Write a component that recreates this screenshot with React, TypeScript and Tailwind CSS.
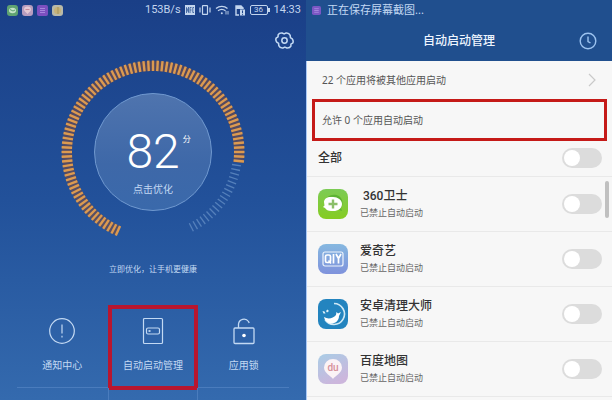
import React from 'react';

interface AppEntry {
  id: string;
  name: string;
  icon: React.ReactNode;
}

const STATUS = '已禁止自动启动';

const ShieldIcon = () => (
  <svg viewBox="0 0 30 30" className="size-[30px]" aria-hidden="true">
    <defs>
      <linearGradient id="shield" x1="0" y1="0" x2="0" y2="1">
        <stop offset="0" stopColor="#7ccb55" />
        <stop offset="1" stopColor="#86cc22" />
      </linearGradient>
    </defs>
    <rect width="30" height="30" rx="8" fill="url(#shield)" />
    <path d="M9 8.500C14 4 22 5.500 24 11c1 3 .5 6-1 8l1 3-4-1.500c4-4 3-10-2-12-3-1.200-6-1-9 0Z" fill="#55ab2f" opacity=".8" />
    <path d="M6 13c0-3.500 4-5.500 8-5 5-.5 10 2.500 10 7 0 5-5 7.500-9.500 7-4 .5-6-1-7.500-3l-2-1 1.500-1.500Z" fill="#fff" />
    <path d="M15 10.500v9M10.500 15h9" stroke="#8bbf6a" strokeWidth="2.400" />
  </svg>
);

const QiyIcon = () => (
  <svg viewBox="0 0 30 30" className="size-[30px]" aria-hidden="true">
    <defs>
      <linearGradient id="qiy" x1="0" y1="0" x2="0" y2="1">
        <stop offset="0" stopColor="#86b8e0" />
        <stop offset="1" stopColor="#7f92dc" />
      </linearGradient>
    </defs>
    <rect width="30" height="30" rx="8" fill="url(#qiy)" />
    <rect x="5" y="8" width="20" height="14" rx="2" fill="none" stroke="#eef4fc" strokeWidth="1.200" />
    <rect x="7.500" y="11" width="5" height="7.500" rx="1.500" fill="none" stroke="#fff" strokeWidth="1.700" />
    <path d="M10.500 16.500l2.500 3M15.500 10v9.500M18 10l2.500 4.500 2.500-4.500M20.500 14v5.500" fill="none" stroke="#fff" strokeWidth="1.700" />
  </svg>
);

const WhaleIcon = () => (
  <svg viewBox="0 0 30 30" className="size-[30px]" aria-hidden="true">
    <rect width="30" height="30" rx="8" fill="#2384bf" />
    <path d="M16 4.500a10.500 10.500 0 1 1-9 16" fill="none" stroke="#cfe9f6" strokeWidth="1.600" />
    <path d="M6 18c4 2.500 9 1.500 12-2l.5-3 1.500 1.500 3-1.500-2 4c0 5-4 7.500-7.500 7.500S7 22 6 18Z" fill="#fff" />
    <path d="M4.500 12l2 .5 1 2-2 0ZM9.500 10.500l1.500 1.500-2 1.500-1-1.500Z" fill="#e4f4fb" />
  </svg>
);

const MapIcon = () => (
  <svg viewBox="0 0 30 30" className="size-[30px]" aria-hidden="true">
    <defs>
      <linearGradient id="map" x1="0" y1="0" x2=".5" y2="1">
        <stop offset="0" stopColor="#a9cde6" />
        <stop offset="1" stopColor="#ccb6dc" />
      </linearGradient>
    </defs>
    <rect width="30" height="30" rx="8" fill="url(#map)" />
    <path d="M15 25c-2-3-9-6-9-11.500a9 8.500 0 0 1 18 0C24 19 17 22 15 25Z" fill="#fbf3f6" />
    <text x="15" y="17" textAnchor="middle" fontSize="10" fontWeight="500" fill="#d6909a" fontFamily="Roboto, sans-serif">du</text>
  </svg>
);

const apps: AppEntry[] = [
  { id: '360', name: '\u00a0360卫士', icon: <ShieldIcon /> },
  { id: 'iqiyi', name: '爱奇艺', icon: <QiyIcon /> },
  { id: 'cleaner', name: '安卓清理大师', icon: <WhaleIcon /> },
  { id: 'map', name: '百度地图', icon: <MapIcon /> },
];

const TICKS = 104;
const ACTIVE_TICKS = 85;

const Gauge = () => (
  <svg viewBox="-92 -92 184 184" className="col-start-1 row-start-1 size-[184px]" aria-hidden="true">
    <defs>
      <linearGradient id="disc" x1="0" y1="0" x2="0" y2="1">
        <stop offset="0" stopColor="#4f74ae" />
        <stop offset=".6" stopColor="#3e68a8" />
        <stop offset="1" stopColor="#3a69ab" />
      </linearGradient>
    </defs>
    {/* warm glow behind the lit ticks */}
    <circle
      r="86"
      fill="none"
      stroke="#8a4a30"
      strokeOpacity=".5"
      strokeWidth="10"
      pathLength="360"
      strokeDasharray="253 107"
      transform="rotate(114)"
    />
    {Array.from({ length: TICKS }, (_, i) => {
      const active = i < ACTIVE_TICKS;
      return (
        <line
          key={i}
          x1={active ? 81 : 80}
          x2={active ? 91.5 : 89}
          y1="0"
          y2="0"
          stroke={active ? '#dc9a50' : '#5580bb'}
          strokeWidth={active ? 2.4 : 1.3}
          transform={`rotate(${114 + i * 3})`}
        />
      );
    })}
    <circle r="58.500" fill="url(#disc)" stroke="#6f98cf" strokeWidth="1" />
  </svg>
);

const Toggle = ({ id, label }: { id: string; label: string }) => (
  <input
    id={id}
    type="checkbox"
    role="switch"
    aria-label={label}
    className="flex h-5 w-10 shrink-0 appearance-none items-center rounded-full bg-[#dcdcdc] p-0.5 before:size-4 before:rounded-full before:bg-white checked:justify-end checked:bg-[#3b8be0]"
  />
);

const StatusBar = () => (
  <div className="flex h-5 items-center justify-between pr-[5px] pl-[7px] font-[Roboto,sans-serif] text-[11px] text-[#c3d5ee]">
    <div className="flex gap-1">
      <svg viewBox="0 0 11 11" className="size-[11px]">
        <rect width="11" height="11" rx="3" fill="#5fa372" />
        <ellipse cx="5.500" cy="5.500" rx="3.500" ry="2.700" fill="#c4e3c8" />
        <path d="M3 4.500l3 1.500 2-1" stroke="#5fa372" fill="none" />
      </svg>
      <svg viewBox="0 0 11 11" className="size-[11px]">
        <rect width="11" height="11" rx="3" fill="#b79dbf" />
        <path d="M5.500 9C4 7 2 6.500 2 4.500a3.500 3 0 0 1 7 0C9 6.500 7 7 5.500 9Z" fill="#e4c9d4" />
        <path d="M3.500 4.500h4" stroke="#c58b9c" />
      </svg>
      <svg viewBox="0 0 11 11" className="size-[11px]">
        <rect width="11" height="11" rx="2" fill="#7c50c0" />
        <path d="M3 3.500h5M3 5.500h5M3 7.500h5" stroke="#a687dd" />
      </svg>
      <svg viewBox="0 0 11 11" className="size-[11px]">
        <rect width="11" height="11" rx="3" fill="#b9b9a8" />
        <circle cx="5.500" cy="5.500" r="3.500" fill="#c5b278" />
        <path d="M6 2v7" stroke="#a3935c" />
      </svg>
    </div>
    <div className="flex items-center gap-1">
      <span>153B/s</span>
      <svg viewBox="0 0 10 10" className="size-2.5">
        <rect width="10" height="10" fill="#c3d5ee" />
        <path d="M1.500 8V2.500l2 5V2M5 8V2.500h1.500M5 5h1.500M9 2.500H7.800v5H9" stroke="#3a609c" strokeWidth=".9" fill="none" />
      </svg>
      <svg viewBox="0 0 12 10" className="h-2.5 w-3" fill="none" stroke="currentColor">
        <rect x="3.500" y=".6" width="5" height="8.800" rx=".5" strokeWidth="1.200" />
        <path d="M1 2.500v5M11 2.500v5" strokeWidth="1.200" />
      </svg>
      <svg viewBox="0 0 14 10" className="h-2.5 w-3.5" fill="none" stroke="currentColor" strokeWidth="1.300">
        <path d="M1 3.500a9 9 0 0 1 11.500 0M3 5.800a6 6 0 0 1 7.500 0" />
        <circle cx="6.800" cy="8.300" r="1" fill="currentColor" stroke="none" />
        <path d="M11 9.500V6M13 6v3.500" strokeWidth=".9" />
      </svg>
      <svg viewBox="0 0 11 11" className="ml-0.5 size-[11px]" fill="none" stroke="currentColor">
        <path d="M4 10H1V1h5l2.500 2.500" strokeWidth="1.400" />
        <path d="M1 1h5l3 3H1Z" fill="currentColor" stroke="none" />
        <rect x="5" y="4.500" width="5" height="6" fill="currentColor" stroke="none" />
        <path d="M7.500 5.500v2.500M7.500 8.800v1" stroke="#1c4288" />
      </svg>
      <span className="flex h-[11px] items-center">
        <span className="flex h-2.5 w-[18px] items-center justify-center rounded-xs border border-current text-[8px] leading-none">36</span>
        <span className="h-1 w-0.5 bg-[#c3d5ee]" />
      </span>
      <span>14:33</span>
    </div>
  </div>
);

const OptimizeScreen = () => (
  <section className="flex flex-col overflow-hidden bg-linear-to-b from-[#1a3f87] via-[#22519a] to-[#346aae] text-[#c3d9f3]">
    <StatusBar />
    <div className="flex h-10 items-center justify-end px-3">
      <button type="button" aria-label="设置" className="size-[19px]">
        <svg viewBox="0 0 20 20" className="size-full" fill="none" stroke="currentColor" strokeWidth="1.600" strokeLinejoin="round">
          <path
            transform="rotate(30 10 10)"
            d="M7.500 2.300Q10 .5 12.500 2.300L13.800 4.200 16.200 4.400Q19 5.800 18.800 8.200L17.800 10 18.800 11.800Q19 14.200 16.200 15.600L13.800 15.800 12.500 17.700Q10 19.500 7.500 17.700L6.200 15.800 3.800 15.600Q1 14.200 1.200 11.800L2.200 10 1.200 8.200Q1 5.800 3.800 4.400L6.200 4.200Z"
          />
          <circle cx="10" cy="10" r="2.800" />
        </svg>
      </button>
    </div>
    <div className="grid place-items-center">
      <Gauge />
      <button type="button" className="z-10 col-start-1 row-start-1 flex size-[118px] flex-col items-center rounded-full pt-[30px]">
        <span className="flex items-start">
          <span className="w-3" />
          <span className="font-[Roboto,sans-serif] text-[48px] leading-[58px] font-light text-white">82</span>
          <span className="w-3 pt-2.5 pl-0.5 text-[8px] leading-3 text-white">分</span>
        </span>
        <span className="text-[10px] leading-4">点击优化</span>
      </button>
    </div>
    <p className="pt-[17px] text-center text-[8px] leading-4">立即优化，让手机更健康</p>
    <nav className="mx-[17px] mt-7 grid h-[83px] grid-cols-3 border-b border-[#4a7cbd] text-[10px] leading-4">
      <button type="button" className="flex flex-col items-center gap-3 pt-3">
        <svg viewBox="0 0 28 28" className="size-7" fill="none" stroke="currentColor" strokeWidth="1.200">
          <circle cx="14" cy="14" r="12.300" />
          <path d="M14 7.500v9M14 18.800v1.700" />
        </svg>
        通知中心
      </button>
      <button type="button" className="-mb-[3px] flex flex-col items-center gap-3 border-4 border-[#b8162f] pt-2">
        <svg viewBox="0 0 28 28" className="size-7" fill="none" stroke="currentColor" strokeWidth="1.200">
          <rect x="4.500" y="1.500" width="19" height="25" rx="1" />
          <rect x="7.500" y="11" width="13" height="6" rx="1.500" />
          <path d="M9.500 14h2" strokeWidth="1.800" />
        </svg>
        自动启动管理
      </button>
      <button type="button" className="flex flex-col items-center gap-3 pt-3">
        <svg viewBox="0 0 28 28" className="size-7" fill="none" stroke="currentColor" strokeWidth="1.300">
          <rect x="4" y="11" width="20" height="15.500" rx="1" />
          <path d="M8.500 11V7a5.500 5.500 0 0 1 10-2.500l.7 1.500" />
          <circle cx="14" cy="18.500" r="1.800" fill="#fff" stroke="none" />
        </svg>
        应用锁
      </button>
    </nav>
    <div className="mx-[17px] grid flex-1 grid-cols-3">
      <div className="col-start-2 border-x border-[#4a7cbd]" />
    </div>
  </section>
);

const StartupScreen = () => (
  <section className="flex flex-col bg-[#f7f7f7] text-[#333]">
    <header className="bg-[#204f8e] text-[#c3d9f3]">
      <div className="flex h-5 items-center gap-1.5 px-1.5 text-[11px]">
        <svg viewBox="0 0 10 10" className="size-[9px]" aria-hidden="true">
          <rect width="10" height="10" rx="2" fill="#7b57c4" />
          <path d="M2.500 3h5M2.500 5h5M2.500 7h5" stroke="#a88ae0" />
        </svg>
        <span>正在保存屏幕截图...</span>
      </div>
      <div className="grid h-[41px] grid-cols-[1fr_auto_1fr] items-center px-[15px]">
        <h1 className="col-start-2 text-xs font-medium text-[#eef5ff]">自动启动管理</h1>
        <button type="button" aria-label="历史记录" className="size-[18px] justify-self-end">
          <svg viewBox="0 0 18 18" className="size-full" fill="none" stroke="#9cc3f0" strokeWidth="1.400">
            <circle cx="9" cy="9" r="7.800" />
            <path d="M9 4.500V9.500l2.500 1.500" />
          </svg>
        </button>
      </div>
    </header>
    <div className="flex-1 overflow-hidden border-l border-[#a9c8f5] text-[10px]">
      <a href="#linked" className="flex h-[38px] items-center justify-between pr-4 pl-[15px] text-[#555]">
        <span>22 个应用将被其他应用启动</span>
        <svg viewBox="0 0 8 14" className="h-3.5 w-2" fill="none" stroke="#c9c9c9" strokeWidth="1.200" aria-hidden="true">
          <path d="M1 1l6 6-6 6" />
        </svg>
      </a>
      <div className="mx-[5px] flex h-[42px] items-center border-3 border-[#c51a18] px-[7px] text-[#555]">允许 0 个应用自动启动</div>
      <div className="flex h-9 items-center justify-between border-b border-[#e9e9e9] pr-2.5 pb-0.5 pl-[11px]">
        <label htmlFor="all" className="text-xs font-medium">全部</label>
        <Toggle id="all" label="全部" />
      </div>
      <div className="relative">
        <ul>
          {apps.map((app) => (
            <li key={app.id} className="flex h-[55px] items-center gap-3 border-b border-[#e9e9e9] pr-2.5 pl-[11px]">
              {app.icon}
              <label htmlFor={app.id} className="flex flex-1 flex-col">
                <span className="font-[Roboto,'Noto_Sans_CJK_SC',sans-serif] text-xs leading-[18px] font-medium">{app.name}</span>
                <span className="text-[9px] leading-4 text-[#666]">{STATUS}</span>
              </label>
              <Toggle id={app.id} label={app.name.trim()} />
            </li>
          ))}
        </ul>
        <div className="absolute top-1 right-[3px] h-[37px] w-1 rounded-full bg-[#c0c0c0]" />
      </div>
    </div>
  </section>
);

export default function App() {
  return (
    <main className="grid min-h-screen grid-cols-2 font-['Noto_Sans','Noto_Sans_CJK_SC',sans-serif]">
      <OptimizeScreen />
      <StartupScreen />
    </main>
  );
}
